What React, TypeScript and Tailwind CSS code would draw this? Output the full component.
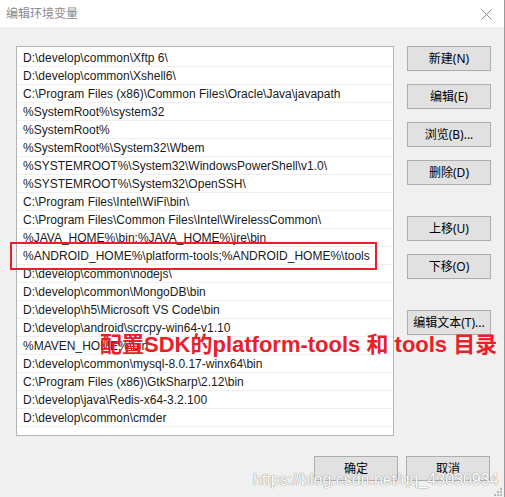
const paths = [
  "D:\\develop\\common\\Xftp 6\\",
  "D:\\develop\\common\\Xshell6\\",
  "C:\\Program Files (x86)\\Common Files\\Oracle\\Java\\javapath",
  "%SystemRoot%\\system32",
  "%SystemRoot%",
  "%SystemRoot%\\System32\\Wbem",
  "%SYSTEMROOT%\\System32\\WindowsPowerShell\\v1.0\\",
  "%SYSTEMROOT%\\System32\\OpenSSH\\",
  "C:\\Program Files\\Intel\\WiFi\\bin\\",
  "C:\\Program Files\\Common Files\\Intel\\WirelessCommon\\",
  "%JAVA_HOME%\\bin;%JAVA_HOME%\\jre\\bin",
  "%ANDROID_HOME%\\platform-tools;%ANDROID_HOME%\\tools",
  "D:\\develop\\common\\nodejs\\",
  "D:\\develop\\common\\MongoDB\\bin",
  "D:\\develop\\h5\\Microsoft VS Code\\bin",
  "D:\\develop\\android\\scrcpy-win64-v1.10",
  "%MAVEN_HOME%\\bin",
  "D:\\develop\\common\\mysql-8.0.17-winx64\\bin",
  "C:\\Program Files (x86)\\GtkSharp\\2.12\\bin",
  "D:\\develop\\java\\Redis-x64-3.2.100",
  "D:\\develop\\common\\cmder",
];

// side buttons, mt is the space above each one
const sideButtons = [
  { label: "新建(N)", mt: "mt-0" },
  { label: "编辑(E)", mt: "mt-[13px]" },
  { label: "浏览(B)...", mt: "mt-[13px]" },
  { label: "删除(D)", mt: "mt-[13px]" },
  { label: "上移(U)", mt: "mt-[31px]" },
  { label: "下移(O)", mt: "mt-[13px]" },
  { label: "编辑文本(T)...", mt: "mt-[31px]" },
];

function WinButton({ label, className }: { label: string; className?: string }) {
  return (
    <button
      className={`h-[25px] w-[84px] border border-[#adadad] bg-[#e1e1e1] text-[12px] text-black ${className ?? ""}`}
    >
      {label}
    </button>
  );
}

export default function App() {
  return (
    <div
      className="relative h-[497px] w-[505px] overflow-hidden border-r border-[#9a9a9a] bg-[#f0f0f0] font-['Segoe_UI','Noto_Sans','Noto_Sans_CJK_SC',sans-serif]"
    >
      {/* title bar */}
      <div className="flex h-[27px] items-center justify-between bg-white pl-[6px] pr-[12px]">
        <span className="text-[12px] text-[#8a8a8a]">编辑环境变量</span>
        <svg width="11" height="11" viewBox="0 0 11 11" className="mt-[1px]">
          <path d="M0.5 0.5L10.5 10.5M10.5 0.5L0.5 10.5" stroke="#8a8a8a" strokeWidth="1" />
        </svg>
      </div>

      <div className="flex pl-[16px] pt-[19px]">
        <div className="h-[390px] w-[378px] border border-[#b4b4b4] bg-white pt-[2px]">
          {paths.map((p) => (
            <div
              key={p}
              className="flex h-[18px] items-center border-b border-[#f0f0f0] pl-[6px] text-[12px] leading-none text-[#1a1a1a] font-['Liberation_Sans','Noto_Sans_CJK_SC',sans-serif]"
            >
              {p}
            </div>
          ))}
        </div>
        <div className="ml-[13px] flex flex-col">
          {sideButtons.map((b) => (
            <WinButton key={b.label} label={b.label} className={b.mt} />
          ))}
        </div>
      </div>

      <div className="mt-[20px] flex justify-end gap-[8px] pr-[14px]">
        <WinButton label="确定" />
        <WinButton label="取消" />
      </div>

      {/* annotation box around the android row */}
      <div className="absolute left-[10px] top-[242px] h-[28px] w-[367px] border-2 border-[#e8202a]" />

      <div className="absolute left-[100px] top-[334px] whitespace-nowrap text-[22px] font-bold leading-none text-[#e8202a] font-['Liberation_Sans','Noto_Sans_CJK_SC',sans-serif]">
        配置SDK的platform-tools 和 tools 目录
      </div>

      {/* csdn watermark */}
      <div className="absolute left-[253px] top-[468px] whitespace-nowrap text-[16px] text-white [text-shadow:0_0_1px_#8a8a8a,0_0_1px_#8a8a8a] font-['Liberation_Sans',sans-serif]">
        https://blog.csdn.net/qq_43030934
      </div>

      {/* resize grip */}
      <svg width="8" height="8" viewBox="0 0 8 8" className="absolute bottom-[1px] right-[2px]">
        <rect x="6" y="0" width="2" height="2" fill="#b8b8b8" />
        <rect x="3" y="3" width="2" height="2" fill="#b8b8b8" />
        <rect x="6" y="3" width="2" height="2" fill="#b8b8b8" />
        <rect x="0" y="6" width="2" height="2" fill="#b8b8b8" />
        <rect x="3" y="6" width="2" height="2" fill="#b8b8b8" />
        <rect x="6" y="6" width="2" height="2" fill="#b8b8b8" />
      </svg>
    </div>
  );
}
